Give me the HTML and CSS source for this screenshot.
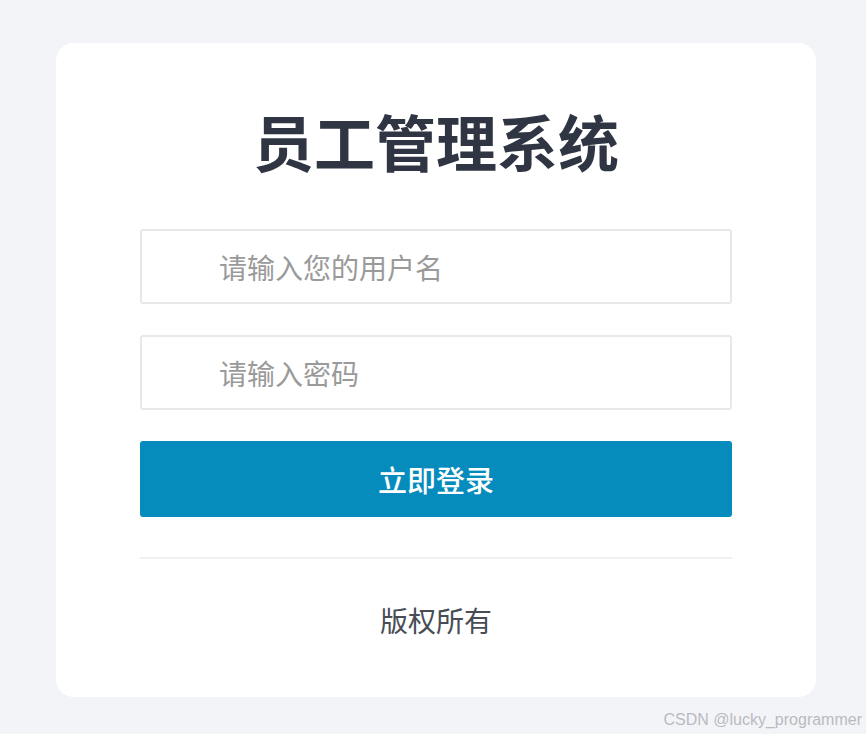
FILE: index.html
```html
<!DOCTYPE html>
<html lang="zh-CN">
<head>
<meta charset="utf-8">
<title>员工管理系统</title>
<link rel="stylesheet" href="styles.css">
</head>
<body>
<div class="page">
  <div class="card">
    <h1 class="title">员工管理系统</h1>
    <form class="form">
      <input class="field" type="text" placeholder="请输入您的用户名">
      <input class="field" type="password" placeholder="请输入密码">
      <button class="btn" type="button">立即登录</button>
    </form>
    <div class="divider"></div>
    <div class="footer">版权所有</div>
  </div>
</div>
<div class="watermark">CSDN @lucky_programmer</div>
</body>
</html>
```
FILE: styles.css
```css
html, body {
  margin: 0;
  padding: 0;
}
body {
  background: #f3f4f8;
  font-family: "Noto Sans CJK SC", "Noto Sans", sans-serif;
  width: 866px;
  height: 734px;
  position: relative;
  overflow: hidden;
}
.page {
  padding: 43px 0 0 56px;
}
.card {
  box-sizing: border-box;
  width: 760px;
  height: 654px;
  background: #ffffff;
  border-radius: 18px;
  padding: 62px 84px 0 84px;
  display: flex;
  flex-direction: column;
}
.title {
  margin: 0;
  text-align: center;
  font-size: 61px;
  line-height: 72px;
  font-weight: 700;
  color: #2f3542;
  letter-spacing: 0;
}
.form {
  margin: 52px 0 0 0;
  display: flex;
  flex-direction: column;
  gap: 31px;
}
.field {
  box-sizing: border-box;
  width: 592px;
  height: 75px;
  border: 2px solid #e8e8e8;
  border-radius: 3px;
  padding: 0 0 0 77px;
  font-family: "Noto Sans CJK SC", sans-serif;
  font-size: 28px;
  color: #333;
  outline: none;
  background: #fff;
}
.field::placeholder {
  color: #9a9a9a;
}
.btn {
  box-sizing: border-box;
  width: 592px;
  height: 76px;
  border: none;
  border-radius: 3px;
  background: #068cbc;
  color: #ffffff;
  font-family: "Noto Sans CJK SC", sans-serif;
  font-size: 29px;
  font-weight: 500;
  padding: 0;
}
.divider {
  margin-top: 40px;
  height: 2px;
  background: #f0f0f0;
}
.footer {
  margin-top: 41px;
  text-align: center;
  font-size: 28px;
  line-height: 40px;
  color: #474c55;
}
.watermark {
  position: absolute;
  right: 4px;
  bottom: 5px;
  font-family: "Liberation Sans", Arial, sans-serif;
  font-size: 16px;
  color: #b9bbbf;
}
```
